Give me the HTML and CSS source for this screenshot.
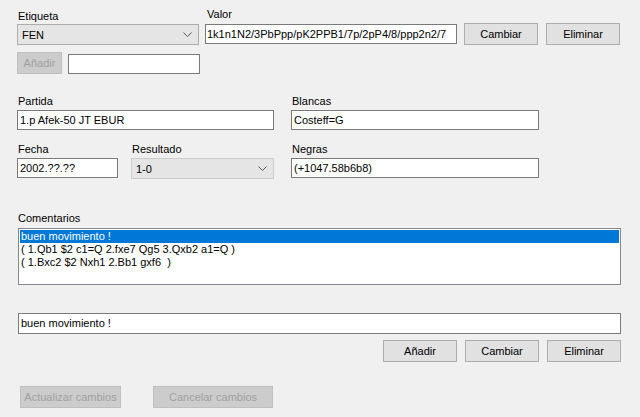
FILE: index.html
```html
<!DOCTYPE html>
<html lang="es">
<head>
<meta charset="utf-8">
<title>Etiquetas</title>
<link rel="stylesheet" href="styles.css">
</head>
<body>
<div class="form">
  <div class="row row1">
    <div class="field f-etiqueta">
      <label class="lbl">Etiqueta</label>
      <div class="combo combo-tag"><span>FEN</span><svg class="chev" width="9" height="5" viewBox="0 0 9 5"><path d="M0.5 0.5 L4.5 4.5 L8.5 0.5" fill="none" stroke="#555" stroke-width="1"/></svg></div>
    </div>
    <div class="field f-valor">
      <label class="lbl">Valor</label>
      <div class="input input-valor">1k1n1N2/3PbPpp/pK2PPB1/7p/2pP4/8/ppp2n2/7</div>
    </div>
    <button class="btn b-cambiar1">Cambiar</button>
    <button class="btn b-eliminar1">Eliminar</button>
  </div>
  <div class="row row2">
    <button class="btn disabled b-anadir1">Añadir</button>
    <div class="input input-new"></div>
  </div>
  <div class="row row3">
    <div class="field f-partida">
      <label class="lbl">Partida</label>
      <div class="input">1.p Afek-50 JT EBUR</div>
    </div>
    <div class="field f-blancas">
      <label class="lbl">Blancas</label>
      <div class="input">Costeff=G</div>
    </div>
  </div>
  <div class="row row4">
    <div class="field f-fecha">
      <label class="lbl">Fecha</label>
      <div class="input">2002.??.??</div>
    </div>
    <div class="field f-resultado">
      <label class="lbl">Resultado</label>
      <div class="combo combo-res"><span>1-0</span><svg class="chev" width="9" height="5" viewBox="0 0 9 5"><path d="M0.5 0.5 L4.5 4.5 L8.5 0.5" fill="none" stroke="#555" stroke-width="1"/></svg></div>
    </div>
    <div class="field f-negras">
      <label class="lbl">Negras</label>
      <div class="input">(+1047.58b6b8)</div>
    </div>
  </div>
  <div class="comments">
    <label class="lbl">Comentarios</label>
    <div class="listbox">
      <div class="item selected">buen movimiento !</div>
      <div class="item">( 1.Qb1 $2 c1=Q 2.fxe7 Qg5 3.Qxb2 a1=Q )</div>
      <div class="item">( 1.Bxc2 $2 Nxh1 2.Bb1 gxf6&nbsp; )</div>
    </div>
  </div>
  <div class="input input-comment">buen movimiento !</div>
  <div class="row row-cbtns">
    <button class="btn">Añadir</button>
    <button class="btn">Cambiar</button>
    <button class="btn">Eliminar</button>
  </div>
  <div class="row row-bottom">
    <button class="btn disabled b-actualizar">Actualizar cambios</button>
    <button class="btn disabled b-cancelar">Cancelar cambios</button>
  </div>
</div>
</body>
</html>
```

FILE: styles.css
```css
* { box-sizing: border-box; }
html, body {
  margin: 0;
  padding: 0;
  background: #f0f0f0;
  width: 640px;
  height: 417px;
  overflow: hidden;
}
body {
  font-family: "Liberation Sans", Arial, sans-serif;
  font-size: 11px;
  color: #000;
}
.form {
  display: flex;
  flex-direction: column;
  padding-top: 8px;
}
.row {
  display: flex;
  align-items: flex-start;
}
.field {
  display: flex;
  flex-direction: column;
}
.lbl {
  display: block;
  line-height: 13px;
  height: 13px;
  padding-left: 1px;
  white-space: nowrap;
}
.input {
  height: 20px;
  background: #fff;
  border: 1px solid #7a7a7a;
  line-height: 18px;
  padding: 0 2px;
  white-space: nowrap;
  overflow: hidden;
}
.combo {
  height: 21px;
  background: #e5e5e5;
  border: 1px solid #cccccc;
  display: flex;
  align-items: center;
  justify-content: space-between;
  padding: 0 6px 0 4px;
}
.combo-tag { border-color: #adadad; }
.combo-res { border-color: #cccccc; }
.chev { display: block; }
.btn {
  font-family: inherit;
  font-size: 11px;
  color: #000;
  background: #e1e1e1;
  border: 1px solid #adadad;
  height: 22px;
  width: 74px;
  padding: 0;
  margin: 0;
  line-height: 20px;
  border-radius: 0;
}
.btn.disabled {
  background: #cccccc;
  border-color: #bfbfbf;
  color: #a0a0a0;
}

/* row 1 */
.row1 { padding-left: 17px; }
.f-etiqueta { margin-top: 2px; width: 182px; }
.f-etiqueta .lbl { margin-bottom: 1px; }
.f-valor { margin-left: 6px; width: 252px; }
.f-valor .lbl { margin-bottom: 3px; padding-left: 2px; }
.input-valor { padding-left: 1px; }
.b-cambiar1 { margin-left: 7px; margin-top: 15px; }
.b-eliminar1 { margin-left: 8px; margin-top: 15px; }

/* row 2 */
.row2 { padding-left: 17px; margin-top: 7px; }
.b-anadir1 { width: 45px; }
.input-new { width: 132px; margin-left: 6px; margin-top: 2px; }

/* rows 3/4 */
.row3 { padding-left: 17px; margin-top: 21px; }
.row4 { padding-left: 17px; margin-top: 13px; }
.row3 .input, .row4 .input, .row4 .combo { margin-top: 2px; }
.f-partida { width: 257px; }
.f-blancas { width: 248px; margin-left: 17px; }
.f-fecha { width: 101px; }
.f-resultado { width: 143px; margin-left: 13px; }
.f-negras { width: 248px; margin-left: 17px; }

/* comments */
.comments {
  margin-top: 33px;
  padding-left: 18px;
  display: flex;
  flex-direction: column;
}
.comments .lbl { padding-left: 0; }
.listbox {
  margin-top: 3px;
  width: 603px;
  height: 57px;
  background: #fff;
  border: 1px solid #828790;
  padding: 1px;
}
.item {
  height: 13px;
  line-height: 13px;
  padding-left: 1px;
  white-space: nowrap;
}
.item.selected {
  background: #0078d7;
  color: #fff;
}
.input-comment {
  margin-top: 28px;
  margin-left: 18px;
  width: 603px;
  height: 21px;
  line-height: 19px;
}
.row-cbtns {
  margin-top: 6px;
  padding-left: 383px;
  gap: 8px;
}
.row-bottom {
  margin-top: 24px;
  padding-left: 20px;
}
.b-actualizar { width: 101px; }
.b-cancelar { width: 120px; margin-left: 32px; }
```
